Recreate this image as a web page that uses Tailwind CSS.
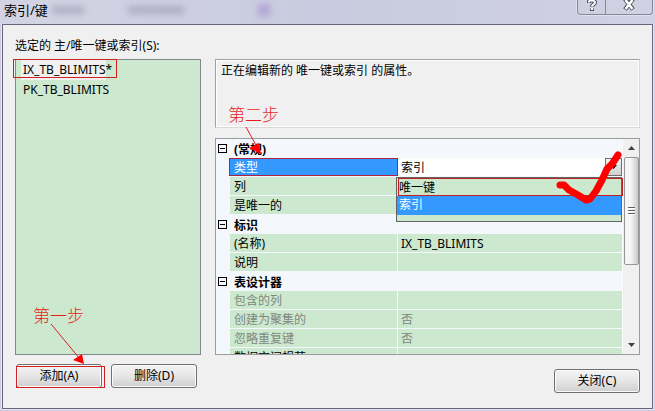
<!DOCTYPE html>
<html lang="zh-CN">
<head>
  <meta charset="UTF-8" />
  <meta name="viewport" content="width=device-width, initial-scale=1.0"/>
  <title>索引/键</title>
  <script src="https://cdn.jsdelivr.net/npm/@tailwindcss/browser@4"></script>
  <style>
    body { font-family: 'Noto Sans', 'Noto Sans CJK SC', sans-serif; }
  </style>
</head>
<body class="min-h-screen flex flex-col bg-[#cfcbe4] text-xs text-black">

  <!-- title bar -->
  <header class="relative flex h-6 shrink-0 items-start justify-between overflow-hidden bg-gradient-to-r from-[#d3d4e3] via-[#c8cadf] to-[#d0d1e2] pl-1 pr-[2px]">
    <div class="absolute left-[52px] top-[6px] h-2 w-8 bg-[#8f90a8]/50 blur-[3px]"></div>
    <div class="absolute left-[128px] top-[6px] h-2 w-14 bg-[#8f90a8]/50 blur-[3px]"></div>
    <div class="absolute left-[258px] top-1 h-3 w-3 bg-[#a48cd0]/60 blur-[3px]"></div>
    <h1 class="relative text-[13px] leading-5">索引/键</h1>
    <div class="relative flex h-[15px] w-[76px] rounded-b-[4px] border border-t-0 border-[#85879c] shadow-[0_0_0_1px_#e0e1ec]">
      <button type="button" aria-label="帮助" class="flex w-7 justify-center border-r border-[#85879c]">
        <svg width="12" height="12" viewBox="0 0 12 12" fill="none">
          <path d="M3 3V1.500C3 0 9 0 9 2.500C9 4.500 6 4.500 6 6.800M6 8.500V11" stroke="#50525f" stroke-width="4"/>
          <path d="M3 2.500V1.500C3 0 9 0 9 2.500C9 4.500 6 4.500 6 6.500M6 8V10" stroke="#fff" stroke-width="2"/>
        </svg>
      </button>
      <button type="button" aria-label="关闭窗口" class="flex flex-1 justify-center">
        <svg width="14" height="12" viewBox="0 0 14 12" fill="none">
          <path d="M3 -1L11 9.500M11 -1L3 9.500" stroke="#50525f" stroke-width="4.500"/>
          <path d="M3.500 0L10.500 9M10.500 0L3.500 9" stroke="#fff" stroke-width="2.500"/>
        </svg>
      </button>
    </div>
  </header>

  <!-- dialog body -->
  <main class="mx-[2px] mb-[2px] flex flex-1 gap-[14px] border border-[#66667c] bg-[#f0f0f0] px-3 shadow-[0_0_0_1px_#e8e4f2]">

    <section class="relative flex w-[186px] shrink-0 flex-col pt-3 pb-5">
      <h2 id="listLabel" class="h-[22px] whitespace-nowrap leading-[18px]">选定的 主/唯一键或索引(S):</h2>
      <ul role="listbox" aria-labelledby="listLabel" class="relative flex-1 border border-[#828790] bg-[#cce8cf] px-[5px] leading-5">
        <li role="option" aria-selected="true" class="w-[85px] whitespace-nowrap bg-[#f0f0f0] pl-[2px]">IX_TB_BLIMITS*</li>
        <li role="option" aria-selected="false" class="pl-[2px]">PK_TB_BLIMITS</li>
        <li role="presentation" class="absolute -left-[3px] -top-px h-[19px] w-[104px] border border-[#d02020]"></li>
      </ul>
      <div class="mt-[9px] flex gap-[9px] pl-px">
        <button type="button" class="relative h-6 w-[86px] rounded-[3px] border border-[#707070] bg-gradient-to-b from-[#f4f4f4] via-[#e6e6e6] to-[#cfcfcf] shadow-[inset_0_0_0_1px_#fafafa]">
          添加(A)
          <span class="absolute -left-px top-px h-[22px] w-[89px] border border-[#d02020]"></span>
        </button>
        <button type="button" class="h-6 w-[86px] rounded-[3px] border border-[#707070] bg-gradient-to-b from-[#f4f4f4] via-[#e6e6e6] to-[#cfcfcf] shadow-[inset_0_0_0_1px_#fafafa]">删除(D)</button>
      </div>
      <!-- step 1 note -->
      <div class="absolute bottom-[43px] left-[18px] text-[#e81c1c]">
        <p class="text-[17px] font-light leading-5">第一步</p>
        <svg class="-mt-[3px] ml-[17px]" width="36" height="42" viewBox="0 0 36 42">
          <path d="M1 1L30 36" stroke="#d82020" fill="none"/>
          <path d="M34 41L23 37L32 31Z" fill="#f00"/>
        </svg>
      </div>
    </section>

    <section class="flex min-w-0 flex-1 flex-col pt-[34px] pb-[15px]">
      <div class="relative h-[69px] border border-[#a0a0a0] border-r-[#d8d8d8] border-b-[#d8d8d8] pl-[5px] pt-[2px] leading-[18px] shadow-[inset_0_0_0_1px_#fff]">
        <p>正在编辑新的 唯一键或索引 的属性。</p>
        <!-- step 2 note -->
        <div class="absolute left-[12px] top-[45px] z-20 text-[#e81c1c]">
          <p class="text-[17px] font-light leading-5">第二步</p>
          <svg class="ml-4" width="20" height="30" viewBox="0 0 20 30">
            <path d="M2 2L13 22" stroke="#d82020" fill="none"/>
            <path d="M17 29L5 23L15 18Z" fill="#f00"/>
          </svg>
        </div>
      </div>

      <div class="relative mt-[10px] flex h-[217px] overflow-hidden border border-[#9a9ca0] bg-[#f4f7fc]">
        <table class="w-full flex-1 table-fixed border-separate border-spacing-0 self-start text-left leading-4">
          <colgroup><col class="w-[14px]"><col class="w-[168px]"><col></colgroup>
          <tbody>
            <tr class="h-[19px]">
              <td class="p-0"><button type="button" aria-label="折叠" class="ml-[2px] flex h-[9px] w-[9px] items-center justify-center border border-black"><span class="h-px w-[5px] bg-black"></span></button></td>
              <th colspan="2" class="pt-[2px] pb-0 pl-1 font-bold">(常规)</th>
            </tr>
            <tr class="h-[19px]">
              <td class="p-0"></td>
              <th class="relative border-b border-r border-[#f4f7fc] bg-[#3399ff] pt-[2px] pb-0 pl-1 font-normal text-white"><label for="kind">类型</label><span class="absolute -left-px top-0 h-[18px] w-[169px] border border-[#b02040]"></span></th>
              <td class="relative border-b border-[#f4f7fc] bg-white p-0">
                <select id="kind" class="block h-[18px] w-full appearance-none bg-white pl-[3px] pt-[2px] leading-4 outline-none">
                  <option>索引</option>
                  <option>唯一键</option>
                </select>
                <span class="pointer-events-none absolute right-0 top-0 flex h-[18px] w-[17px] items-center justify-center border border-[#707070] bg-gradient-to-b from-[#f3f3f3] to-[#d0d0d0]">
                  <svg width="7" height="4" viewBox="0 0 7 4"><path d="M0 0H7L3.500 4Z"/></svg>
                </span>
                <!-- opened list -->
                <ul class="absolute -left-[2px] right-0 top-[19px] z-10 h-[45px] border border-[#646464] bg-[#cce8cf]">
                  <li class="relative h-[18px] pl-[2px] pt-[2px]">唯一键<span class="absolute -right-[2px] left-px top-0 h-[18px] border border-[#c02020]"></span></li>
                  <li class="h-[19px] bg-[#3399ff] pl-[2px] pt-px text-white">索引</li>
                </ul>
              </td>
            </tr>
            <tr class="h-[19px]">
              <td class="p-0"></td>
              <th class="border-b border-r border-[#f4f7fc] bg-[#cce8cf] pt-[2px] pb-0 pl-1 font-normal">列</th>
              <td class="border-b border-[#f4f7fc] bg-[#cce8cf] p-0"></td>
            </tr>
            <tr class="h-[19px]">
              <td class="p-0"></td>
              <th class="border-b border-r border-[#f4f7fc] bg-[#cce8cf] pt-[2px] pb-0 pl-1 font-normal">是唯一的</th>
              <td class="border-b border-[#f4f7fc] bg-[#cce8cf] p-0"></td>
            </tr>
            <tr class="h-[19px]">
              <td class="p-0"><button type="button" aria-label="折叠" class="ml-[2px] flex h-[9px] w-[9px] items-center justify-center border border-black"><span class="h-px w-[5px] bg-black"></span></button></td>
              <th colspan="2" class="pt-[2px] pb-0 pl-1 font-bold">标识</th>
            </tr>
            <tr class="h-[19px]">
              <td class="p-0"></td>
              <th class="border-b border-r border-[#f4f7fc] bg-[#cce8cf] pt-[2px] pb-0 pl-1 font-normal">(名称)</th>
              <td class="border-b border-[#f4f7fc] bg-[#cce8cf] pt-[2px] pb-0 pl-[3px]">IX_TB_BLIMITS</td>
            </tr>
            <tr class="h-[19px]">
              <td class="p-0"></td>
              <th class="border-b border-r border-[#f4f7fc] bg-[#cce8cf] pt-[2px] pb-0 pl-1 font-normal">说明</th>
              <td class="border-b border-[#f4f7fc] bg-[#cce8cf] p-0"></td>
            </tr>
            <tr class="h-[19px]">
              <td class="p-0"><button type="button" aria-label="折叠" class="ml-[2px] flex h-[9px] w-[9px] items-center justify-center border border-black"><span class="h-px w-[5px] bg-black"></span></button></td>
              <th colspan="2" class="pt-[2px] pb-0 pl-1 font-bold">表设计器</th>
            </tr>
            <tr class="h-[19px] text-[#808880]">
              <td class="p-0"></td>
              <th class="border-b border-r border-[#f4f7fc] bg-[#cce8cf] pt-[2px] pb-0 pl-1 font-normal">包含的列</th>
              <td class="border-b border-[#f4f7fc] bg-[#cce8cf] p-0"></td>
            </tr>
            <tr class="h-[19px] text-[#808880]">
              <td class="p-0"></td>
              <th class="border-b border-r border-[#f4f7fc] bg-[#cce8cf] pt-[2px] pb-0 pl-1 font-normal">创建为聚集的</th>
              <td class="border-b border-[#f4f7fc] bg-[#cce8cf] pt-[2px] pb-0 pl-[3px]">否</td>
            </tr>
            <tr class="h-[19px] text-[#808880]">
              <td class="p-0"></td>
              <th class="border-b border-r border-[#f4f7fc] bg-[#cce8cf] pt-[2px] pb-0 pl-1 font-normal">忽略重复键</th>
              <td class="border-b border-[#f4f7fc] bg-[#cce8cf] pt-[2px] pb-0 pl-[3px]">否</td>
            </tr>
            <tr class="h-[19px]">
              <td class="p-0"></td>
              <th class="border-b border-r border-[#f4f7fc] bg-[#cce8cf] pt-[2px] pb-0 pl-1 font-normal">数据空间规范</th>
              <td class="border-b border-[#f4f7fc] bg-[#cce8cf] p-0"></td>
            </tr>
          </tbody>
        </table>

        <!-- scroll bar -->
        <div class="flex w-[17px] shrink-0 flex-col items-center border-l border-[#fafafa] bg-[#f0f0f0]">
          <svg class="mt-[7px] mb-[7px]" width="7" height="4" viewBox="0 0 7 4"><path d="M3.500 0L7 4H0Z" fill="#404040"/></svg>
          <div class="flex h-[108px] w-[15px] flex-col items-center justify-center gap-px rounded-[2px] border border-[#959595] bg-gradient-to-r from-[#f5f5f5] from-45% to-[#c9c9cc]">
            <span class="h-[2px] w-[7px] border-t border-[#606060] bg-white"></span>
            <span class="h-[2px] w-[7px] border-t border-[#606060] bg-white"></span>
            <span class="h-[2px] w-[7px] border-t border-[#606060] bg-white"></span>
          </div>
          <svg class="mt-auto mb-[7px]" width="7" height="4" viewBox="0 0 7 4"><path d="M0 0H7L3.500 4Z" fill="#404040"/></svg>
        </div>

        <!-- tick mark -->
        <svg class="pointer-events-none absolute right-[14px] top-3 z-20" width="70" height="56" viewBox="0 0 70 56" fill="none">
          <path d="M5 34L9 34L14 39L23 44L31 49L35 48L41 40L47 29L52 18L57 13L63 4" stroke="#f00" stroke-width="7" stroke-linecap="round" stroke-linejoin="round"/>
        </svg>
      </div>

      <button type="button" class="mt-[14px] h-6 w-[86px] self-end rounded-[3px] border border-[#707070] bg-gradient-to-b from-[#f4f4f4] via-[#e6e6e6] to-[#cfcfcf] shadow-[inset_0_0_0_1px_#fafafa]">关闭(C)</button>
    </section>
  </main>
</body>
</html>
